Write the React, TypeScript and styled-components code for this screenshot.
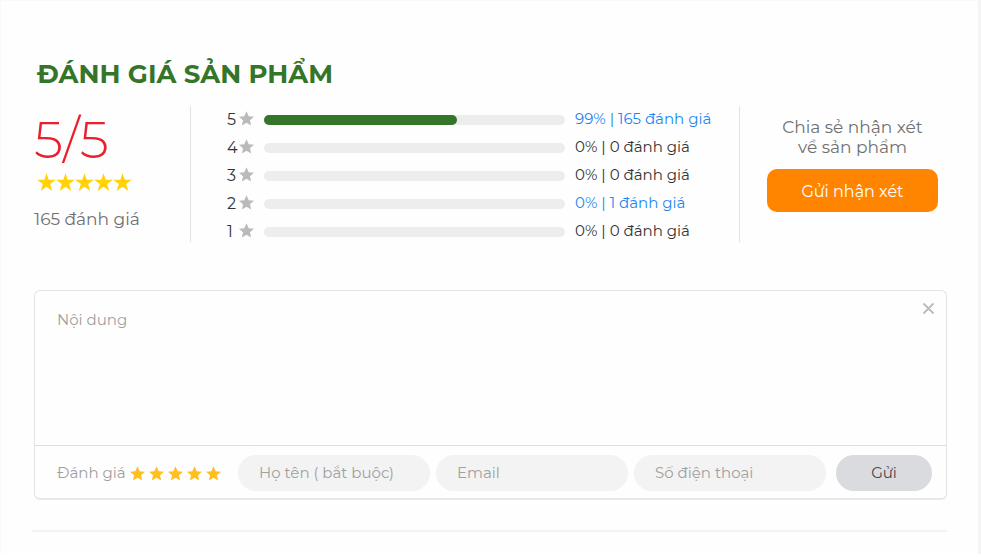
import React, { useState } from "react";
import styled, { createGlobalStyle } from "styled-components";

const GlobalStyle = createGlobalStyle`
  * { box-sizing: border-box; }
  html, body, #root { height: 100%; }
  body {
    margin: 0;
    background: #fff;
    font-family: Montserrat, Inter, "Noto Sans", sans-serif;
    font-size: 16px;
    color: #333;
  }
  #root { padding-bottom: 3px; }
  button, input, textarea { font: inherit; }
`;

const Panel = styled.main`
  min-height: 100%;
  padding: 57px 31px 22px 33px;
  background: #fefefe;
  border: solid #f4f4f4;
  border-width: 1px 3px 0 1px;
  border-left-color: #f9f9f9;
  border-top-color: #f9f9f9;
`;

const Title = styled.h1`
  margin: 0 0 16px 3px;
  font-size: 26px;
  line-height: 32px;
  font-weight: 700;
  color: #357529;
`;

const Summary = styled.section`
  display: grid;
  grid-template-columns: 156px minmax(0, 1fr) 207px;
  height: 136px;
`;

const Score = styled.div`
  display: flex;
  flex-direction: column;
  align-items: flex-start;
`;

const ScoreValue = styled.strong`
  font-size: 52px;
  font-weight: 300;
  line-height: 67px;
  color: #ea1f2d;
`;

const StarLine = styled.div`
  display: flex;
  margin-left: 3px;
`;

const ScoreCount = styled.span`
  margin-top: 16px;
  font-size: 17px;
  line-height: 22px;
  color: #707070;
`;

const Bars = styled.div`
  display: flex;
  flex-direction: column;
  gap: 8px;
  padding: 4px 27px 0 36px;
  border: solid #e2e2e2;
  border-width: 0 1px;
`;

const BarRow = styled.div`
  display: grid;
  grid-template-columns: 12px 15px minmax(0, 1fr) 137px;
  align-items: center;
  height: 20px;
  line-height: 20px;
`;

const Level = styled.span`
  display: contents;
  svg { margin-bottom: 3px; }
`;

const Track = styled.div`
  height: 10px;
  margin: 0 10px;
  border-radius: 5px;
  background: #ededed;
`;

const Fill = styled.div`
  height: 100%;
  border-radius: 5px;
  background: #357529;
`;

const Count = styled.span`
  font-size: 15px;
  line-height: 18px;
  padding-bottom: 2px;
  white-space: nowrap;
`;

const CountLink = styled.a`
  font-size: 15px;
  line-height: 18px;
  padding-bottom: 2px;
  white-space: nowrap;
  color: #1c87f2;
  text-decoration: none;
`;

const Invite = styled.div`
  display: flex;
  flex-direction: column;
  align-items: center;
  padding: 11px 9px 0 27px;
`;

const InviteText = styled.p`
  margin: 0 0 12px;
  font-size: 17px;
  line-height: 20px;
  text-align: center;
  color: #707070;
`;

const InviteButton = styled.button`
  width: 100%;
  height: 43px;
  padding: 2px 0 0;
  border: 0;
  border-radius: 10px;
  background: #ff8500;
  color: #fff;
`;

const ReviewForm = styled.form`
  position: relative;
  margin-top: 48px;
  border: 1px solid #e3e3e3;
  border-bottom: 2px solid #e8e8e8;
  border-radius: 6px;
  font-size: 15px;
`;

const Message = styled.textarea`
  display: block;
  width: 100%;
  height: 154px;
  padding: 19px 48px 12px 22px;
  border: 0;
  background: transparent;
  line-height: 20px;
  resize: none;
  outline: none;
  color: #333;
  &::placeholder { color: #a0a0a0; opacity: 1; }
`;

const CloseButton = styled.button`
  position: absolute;
  top: 11px;
  right: 11px;
  display: flex;
  padding: 0;
  border: 0;
  background: none;
`;

const FormFooter = styled.div`
  display: flex;
  align-items: center;
  gap: 6px;
  padding: 9px 14px 7px 22px;
  border-top: 1px solid #dedede;
`;

const Rating = styled.div`
  display: flex;
  align-items: center;
  flex: 0 0 175px;
  color: #a0a0a0;
`;

const RatingLabel = styled.span`
  flex: 0 0 71px;
  padding-bottom: 2px;
  white-space: nowrap;
`;

const RatingButton = styled.button`
  display: flex;
  justify-content: center;
  width: 19px;
  padding: 0;
  border: 0;
  background: none;
`;

const Field = styled.input`
  flex: 1 1 0;
  min-width: 0;
  height: 36px;
  padding: 0 21px 2px;
  border: 0;
  border-radius: 18px;
  background: #f3f3f3;
  outline: none;
  color: #333;
  &::placeholder { color: #a0a0a0; opacity: 1; }
`;

const SubmitButton = styled.button`
  flex: 0 0 96px;
  height: 36px;
  margin-left: 4px;
  padding: 0 0 2px;
  border: 0;
  border-radius: 18px;
  background: #dadbdf;
  color: #444;
`;

const Divider = styled.hr`
  height: 2px;
  margin: 30px 0 0 -2px;
  border: 0;
  background: #f3f3f3;
`;

const SHARP = "10,0.3 12.3,7.1 19.8,7.1 13.9,11.6 16.1,18.9 10,14.6 3.9,18.9 6.1,11.6 0.2,7.1 7.7,7.1";
const FULL = "10,0.3 12.9,6.9 20,7.6 14.6,12.3 16.2,19.4 10,15.7 3.8,19.4 5.4,12.3 0,7.6 7.1,6.9";

function Star({ size, color, sharp }: { size: number; color: string; sharp?: boolean }) {
  return (
    <svg width={size} height={size} viewBox="0 0 20 20" aria-hidden="true">
      <polygon points={sharp ? SHARP : FULL} fill={color} />
    </svg>
  );
}

const levels = [
  { stars: 5, fill: 64, label: "99% | 165 đánh giá", link: true },
  { stars: 4, fill: 0, label: "0% | 0 đánh giá", link: false },
  { stars: 3, fill: 0, label: "0% | 0 đánh giá", link: false },
  { stars: 2, fill: 0, label: "0% | 1 đánh giá", link: true },
  { stars: 1, fill: 0, label: "0% | 0 đánh giá", link: false },
];

const steps = [1, 2, 3, 4, 5];

export default function App() {
  const [rating, setRating] = useState(5);
  return (
    <>
      <GlobalStyle />
      <Panel>
        <Title>ĐÁNH GIÁ SẢN PHẨM</Title>
        <Summary>
          <Score>
            <ScoreValue>5/5</ScoreValue>
            <StarLine>
              {steps.map((n) => <Star key={n} size={19} color="#ffd20a" sharp />)}
            </StarLine>
            <ScoreCount>165 đánh giá</ScoreCount>
          </Score>
          <Bars>
            {levels.map((l) => (
              <BarRow key={l.stars}>
                <Level>
                  <span>{l.stars}</span>
                  <Star size={15} color="#bababa" />
                </Level>
                <Track>
                  {l.fill > 0 && <Fill style={{ width: `${l.fill}%` }} />}
                </Track>
                {l.link ? <CountLink href="#reviews">{l.label}</CountLink> : <Count>{l.label}</Count>}
              </BarRow>
            ))}
          </Bars>
          <Invite>
            <InviteText>Chia sẻ nhận xét<br />về sản phẩm</InviteText>
            <InviteButton type="button">Gửi nhận xét</InviteButton>
          </Invite>
        </Summary>
        <ReviewForm onSubmit={(e) => e.preventDefault()}>
          <Message aria-label="Nội dung" placeholder="Nội dung" />
          <CloseButton type="button" aria-label="Đóng">
            <svg width="13" height="13" viewBox="0 0 13 13" aria-hidden="true">
              <path d="M1.5 1.5l10 10M11.5 1.5l-10 10" stroke="#bdbdbd" strokeWidth="2" />
            </svg>
          </CloseButton>
          <FormFooter>
            <Rating role="group" aria-label="Đánh giá">
              <RatingLabel>Đánh giá</RatingLabel>
              {steps.map((n) => (
                <RatingButton key={n} type="button" aria-label={`${n} sao`} onClick={() => setRating(n)}>
                  <Star size={15} color={n <= rating ? "#ffbf1f" : "#d0d0d0"} />
                </RatingButton>
              ))}
            </Rating>
            <Field aria-label="Họ tên" placeholder="Họ tên ( bắt buộc)" />
            <Field type="email" aria-label="Email" placeholder="Email" />
            <Field type="tel" aria-label="Số điện thoại" placeholder="Số điện thoại" />
            <SubmitButton type="submit">Gửi</SubmitButton>
          </FormFooter>
        </ReviewForm>
        <Divider />
      </Panel>
    </>
  );
}
